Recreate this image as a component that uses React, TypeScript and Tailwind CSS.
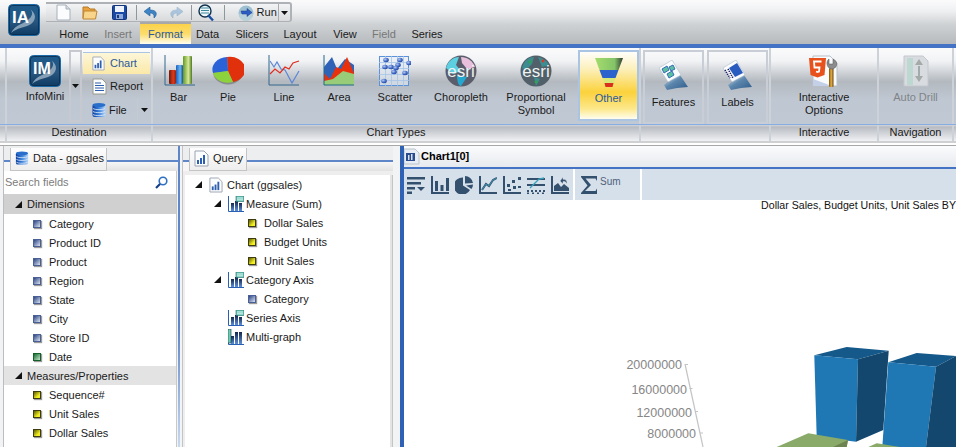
import type { ReactNode } from 'react'

const Caret = ({ color = '#111' }: { color?: string }) => (
  <svg width="7" height="4" viewBox="0 0 7 4" className="block">
    <polygon points="0,0 7,0 3.5,4" fill={color} />
  </svg>
)

const Expander = () => (
  <svg width="7" height="7" viewBox="0 0 7 7" className="block shrink-0">
    <polygon points="0,7 7,7 7,0" fill="#111" />
  </svg>
)

// Square field markers in the trees
const FieldMark = ({ kind }: { kind: 'dim' | 'date' | 'measure' }) => {
  const cls =
    kind === 'dim'
      ? 'border-[#4a5f96] bg-[linear-gradient(135deg,#2c4686,#dce4f2)]'
      : kind === 'date'
        ? 'border-[#14602a] bg-[linear-gradient(135deg,#146c30,#c4e6c8)]'
        : 'border-[#3c3c10] bg-[linear-gradient(135deg,#5c5a08,#f4f020_70%)]'
  return <span className={`block w-[8px] h-[8px] shrink-0 border shadow-[1px_1px_1px_#9a9a9a] ${cls}`} />
}

const BrandTile = ({ label, size, fontSize }: { label: string; size: number; fontSize: number }) => (
  <svg width={size} height={size} viewBox="0 0 32 32" className="block">
    <defs>
      <linearGradient id={`tile${label}`} x1="0" y1="0" x2="0" y2="1">
        <stop offset="0" stopColor="#1c5a8c" />
        <stop offset="0.55" stopColor="#28567e" />
        <stop offset="1" stopColor="#0c3a62" />
      </linearGradient>
    </defs>
    <rect x="0.5" y="0.5" width="31" height="31" rx="4" fill={`url(#tile${label})`} stroke="#1a6aa8" />
    <rect x="1.5" y="1.5" width="29" height="29" rx="3" fill="none" stroke="#0c2c4c" strokeWidth="0.8" />
    <path d="M22 5 C28 11 20 17 13 20 C8 22 5 25 3 29 C10 23 17 24 23 20 C28 16 29 10 22 5Z" fill="#a8bccc" opacity="0.75" />
    <text x="4" y="19" fontSize={fontSize} fontWeight="700" fill="#fff" fontFamily="Liberation Sans, sans-serif">{label}</text>
  </svg>
)

const PageIcon = () => (
  <svg width="15" height="17" viewBox="0 0 15 17" className="block">
    <path d="M1 1H10L14 5V16H1Z" fill="#fbfcfe" stroke="#a8b0bc" />
    <path d="M10 1V5H14" fill="#d8dce4" stroke="#a8b0bc" />
  </svg>
)

const FolderIcon = () => (
  <svg width="16" height="15" viewBox="0 0 16 15" className="block">
    <path d="M1 2H6L8 4H13V13H1Z" fill="#e8a13c" stroke="#b57a28" />
    <path d="M2 6H15L13.5 14H1Z" fill="#f8d58a" stroke="#c08630" />
  </svg>
)

const SaveIcon = () => (
  <svg width="15" height="15" viewBox="0 0 15 15" className="block">
    <rect x="0.5" y="0.5" width="14" height="14" rx="1" fill="#1b4aa6" stroke="#15357a" />
    <rect x="3" y="1" width="9" height="6" fill="#eef3fb" />
    <rect x="4" y="9" width="7" height="5" fill="#8ea8d8" />
    <rect x="5" y="10" width="2" height="3" fill="#1b3a7a" />
  </svg>
)

const UndoIcon = ({ faded }: { faded?: boolean }) => (
  <svg width="14" height="12" viewBox="0 0 14 12" className={`block ${faded ? 'opacity-35 -scale-x-100' : ''}`}>
    <path d="M6 0 L0 4.5 L6 9 V6 C9 6 10.5 7.5 10 11 C13.5 8 13.5 3 6 3Z" fill="#3d85c6" stroke="#205c94" strokeWidth="0.6" />
  </svg>
)

const FindIcon = () => (
  <svg width="16" height="18" viewBox="0 0 16 18" className="block">
    <circle cx="7" cy="7" r="6" fill="#eef6fa" stroke="#10304c" strokeWidth="1.4" />
    <path d="M3 4H11M3 6.5H11M3 9H11" stroke="#3a8a9c" strokeWidth="1" />
    <path d="M10 11L15 16.5" stroke="#1a4fa0" strokeWidth="2.4" />
  </svg>
)

const RunIcon = () => (
  <svg width="16" height="16" viewBox="0 0 16 16" className="block">
    <circle cx="8" cy="8" r="7.5" fill="#9cc0d0" />
    <path d="M1 9 A7 7 0 0 0 15 9 Z" fill="#b8d0da" />
    <path d="M3 6 H9 V3.5 L14 7.5 L9 11.5 V9 H4Z" fill="#2c5cc4" stroke="#1a3a8a" strokeWidth="0.5" />
  </svg>
)

const ChartDocIcon = ({ size = 15 }: { size?: number }) => (
  <svg width={size} height={size + 2} viewBox="0 0 15 17" className="block">
    <path d="M1 1H10L14 5V16H1Z" fill="#fbfcfe" stroke="#9aa4b0" />
    <rect x="3" y="10" width="2" height="4" fill="#2d5fb0" />
    <rect x="6" y="8" width="2" height="6" fill="#2d5fb0" />
    <rect x="9" y="5" width="2" height="9" fill="#2d5fb0" />
  </svg>
)

const ReportIcon = () => (
  <svg width="15" height="17" viewBox="0 0 15 17" className="block">
    <path d="M1 1H10L14 5V16H1Z" fill="#fbfcfe" stroke="#9a9a90" />
    <path d="M3 5H9M3 7.5H12M3 10H12M3 12.5H12" stroke="#2d5fb0" />
  </svg>
)

const DatabaseIcon = ({ w = 14, h = 16, id }: { w?: number; h?: number; id: string }) => (
  <svg width={w} height={h} viewBox="0 0 14 16" className="block">
    <defs>
      <linearGradient id={id} x1="0" y1="0" x2="1" y2="0">
        <stop offset="0" stopColor="#0a3c9c" />
        <stop offset="0.5" stopColor="#3a82dc" />
        <stop offset="1" stopColor="#b8d4f4" />
      </linearGradient>
    </defs>
    <rect x="0.5" y="1.5" width="13" height="13" rx="2" fill={`url(#${id})`} />
    <ellipse cx="7" cy="2.5" rx="6.5" ry="2" fill="#2a6ecc" />
    <path d="M1 6C3 7.5 11 7.5 13 6M1 9C3 10.5 11 10.5 13 9M1 12C3 13.5 11 13.5 13 12" fill="none" stroke="#e4eefa" strokeWidth="0.8" />
  </svg>
)

const AxisIcon = ({ badge }: { badge?: boolean }) => (
  <svg width="16" height="16" viewBox="0 0 16 16" className="block">
    <defs>
      <linearGradient id={badge ? 'axisBadge' : 'axisPlain'} x1="0" y1="0" x2="0" y2="1">
        <stop offset="0" stopColor="#12264c" />
        <stop offset="1" stopColor="#5f8fd8" />
      </linearGradient>
    </defs>
    <path d="M0.5 0V15.5H16" fill="none" stroke="#2a60b4" />
    <rect x="3" y="7" width="3" height="8" fill={`url(#${badge ? 'axisBadge' : 'axisPlain'})`} />
    <rect x="7" y={badge ? 5 : 3} width="3" height={badge ? 10 : 12} fill={`url(#${badge ? 'axisBadge' : 'axisPlain'})`} />
    <rect x="11" y={badge ? 7 : 3} width="3" height={badge ? 8 : 12} fill={`url(#${badge ? 'axisBadge' : 'axisPlain'})`} />
    {badge ? (
      <>
        <rect x="8" y="0" width="8" height="5.5" fill="#6fc8b8" stroke="#1e6a6a" strokeWidth="0.6" />
        <path d="M9 2H15M9 3.8H15" stroke="#fff" strokeWidth="0.7" />
      </>
    ) : (
      <rect x="0" y="0" width="3" height="14" fill="#6fd0b0" stroke="#10304c" strokeWidth="0.6" />
    )}
  </svg>
)

const BarIcon = () => (
  <svg width="32" height="32" viewBox="0 0 32 32" className="block">
    <defs>
      <linearGradient id="barR" x1="0" y1="0" x2="1" y2="0"><stop offset="0" stopColor="#6a1a10" /><stop offset="0.6" stopColor="#e03a1c" /><stop offset="1" stopColor="#8c2410" /></linearGradient>
      <linearGradient id="barB" x1="0" y1="0" x2="1" y2="0"><stop offset="0" stopColor="#1a5fc0" /><stop offset="0.6" stopColor="#6cb6f0" /><stop offset="1" stopColor="#1c4e9a" /></linearGradient>
      <linearGradient id="barG" x1="0" y1="0" x2="1" y2="0"><stop offset="0" stopColor="#5e9a20" /><stop offset="0.6" stopColor="#d8e89c" /><stop offset="1" stopColor="#4c7a1c" /></linearGradient>
    </defs>
    <path d="M1 0V30H31" fill="none" stroke="#33668c" />
    <rect x="5" y="15" width="7" height="14" rx="1" fill="url(#barR)" />
    <rect x="12" y="10" width="7" height="19" rx="1" fill="url(#barB)" />
    <rect x="19" y="1" width="9" height="28" rx="1" fill="url(#barG)" />
  </svg>
)

const PieIcon = () => (
  <svg width="32" height="30" viewBox="0 0 32 30" className="block">
    <ellipse cx="16" cy="16" rx="15" ry="12.5" fill="#6a6a6a" opacity="0.6" />
    <path d="M16 15 L15 1 A15 12.5 0 0 1 21 26 Z" fill="#e0300c" />
    <path d="M16 15 L15 1 A15 12.5 0 0 0 1 17 Z" fill="#2c62d8" />
    <path d="M16 15 L1 17 A15 12.5 0 0 0 21 26 Z" fill="#8cd23c" />
  </svg>
)

const LineIcon = () => (
  <svg width="32" height="32" viewBox="0 0 32 32" className="block">
    <path d="M1 0V30H31" fill="none" stroke="#33668c" />
    <path d="M2 6 L6 12 L9 7 L13 14 L17 15 L24 28 L31 16" fill="none" stroke="#5a86d8" strokeWidth="1.2" />
    <path d="M2 19 L7 14 L12 18 L17 12 L21 14 L25 8 L31 6" fill="none" stroke="#e02c1c" strokeWidth="1.2" />
  </svg>
)

const AreaIcon = () => (
  <svg width="32" height="32" viewBox="0 0 32 32" className="block">
    <path d="M1 12 L9 2 L14 14 L22 4 L31 10 V30 H1Z" fill="#2f63b8" />
    <path d="M1 18 L7 24 L13 12 L18 14 L24 2 L31 18 V30 H1Z" fill="#e8300c" />
    <path d="M1 26 L10 24 L20 16 L31 19 V30 H1Z" fill="#98cc78" />
    <path d="M1 0V30H31" fill="none" stroke="#1f6a8c" />
  </svg>
)

const ScatterIcon = () => {
  const dots = [[7, 4], [21, 4], [6, 11], [12, 11], [19, 9], [30, 7], [15, 16], [26, 17], [5, 25], [17, 12]]
  return (
    <svg width="32" height="30" viewBox="0 0 32 30" className="block">
      <defs>
        <radialGradient id="dotFill" cx="0.35" cy="0.35" r="0.8">
          <stop offset="0" stopColor="#b4c8f0" />
          <stop offset="0.6" stopColor="#3a64c4" />
          <stop offset="1" stopColor="#1c3480" />
        </radialGradient>
      </defs>
      <rect x="0.5" y="0.5" width="29" height="29" fill="#e4ecf6" fillOpacity="0.6" stroke="#5c92d8" />
      <path d="M6.5 0V30M12.5 0V30M18.5 0V30M24.5 0V30M0 6.5H30M0 12.5H30M0 18.5H30M0 24.5H30" stroke="#a4c4ea" strokeWidth="0.8" />
      {dots.map(([x, y]) => (
        <ellipse key={`${x}-${y}`} cx={x} cy={y} rx="2.8" ry="2.2" fill="url(#dotFill)" />
      ))}
    </svg>
  )
}

const EsriGlobe = ({ variant }: { variant: 'choro' | 'prop' }) => (
  <svg width="32" height="32" viewBox="0 0 32 32" className="block">
    <circle cx="16" cy="16" r="15.5" fill={variant === 'choro' ? '#5a5e6c' : '#52606a'} />
    {variant === 'choro' ? (
      <>
        <path d="M1 13 C3 6 8 2 14 2 L11 10 L16 16 L8 19 Z" fill="#5cd0e0" />
        <path d="M16 2 C22 2 28 6 30 12 L22 14 L17 8Z" fill="#e8c0dc" />
        <path d="M12 20 L22 22 L16 31 C14 31 12 28 12 20Z" fill="#24a8d0" />
      </>
    ) : (
      <>
        <path d="M2 13 C4 6 8 2 14 2 L12 9 L6 15Z" fill="#3e8c90" />
        <path d="M18 2 C23 3 27 6 29 10 L22 12Z" fill="#3e8c90" />
        <path d="M14 22 L20 24 L16 31Z" fill="#3e8c90" />
        <circle cx="10" cy="7" r="1.4" fill="#2ca84c" />
        <circle cx="23" cy="6" r="1.4" fill="#d83a2c" />
        <circle cx="16" cy="27" r="1.4" fill="#2ca84c" />
      </>
    )}
    <text x="16" y="21.5" textAnchor="middle" fontSize="17" fill="#eef4f4" fontFamily="Liberation Sans, sans-serif">esri</text>
  </svg>
)

const FunnelIcon = () => (
  <svg width="30" height="32" viewBox="0 0 30 32" className="block">
    <defs>
      <linearGradient id="funTop" x1="0" y1="0" x2="1" y2="0"><stop offset="0" stopColor="#a4dc6c" /><stop offset="0.7" stopColor="#84c468" /><stop offset="1" stopColor="#303a30" /></linearGradient>
    </defs>
    <path d="M1 2 H29 L24.5 14 H5.5Z" fill="url(#funTop)" />
    <path d="M5.5 14 H24.5 L21.5 22 H8.5Z" fill="#2b62cc" />
    <path d="M8.5 22 H21.5 L19.5 27 H10.5Z" fill="#d8e878" />
    <path d="M10.5 27 H19.5 L18.5 31 H11.5Z" fill="#d8301c" />
  </svg>
)

const SheetIcon = ({ id, kind }: { id: string; kind: 'features' | 'labels' }) => (
  <svg width="30" height="30" viewBox="0 0 30 30" className="block">
    <defs>
      <linearGradient id={id} x1="0" y1="0" x2="1" y2="1">
        <stop offset="0" stopColor="#f0f4f8" />
        <stop offset="0.45" stopColor="#5c86ac" />
        <stop offset="1" stopColor="#2c5c8c" />
      </linearGradient>
    </defs>
    <path d="M5 25 L13 18 L21 15 L29 27 L18 28 L8 30Z" fill={`url(#${id})`} />
    <path d="M0 8 L13 0 L22 15 L9 22Z" fill="#fafcfe" stroke="#aebccc" strokeWidth="0.6" />
    {kind === 'features' ? (
      <path d="M3 9 L8 6 L10 10 L5 13Z M10 7 L14 5 L16 9 L12 11Z M8 14 L13 11 L15 15 L10 18Z" fill="#5cc0a0" stroke="#2a60b8" strokeWidth="0.9" />
    ) : (
      <>
        <path d="M6 8 L14 3 L20 13 L12 17Z" fill="#2a5cc0" />
        <path d="M2 10 L7 18 M5 9 L10 18" stroke="#1a1a60" strokeWidth="1.6" strokeDasharray="1.2 1" />
      </>
    )}
  </svg>
)

const Html5Icon = () => (
  <svg width="33" height="33" viewBox="0 0 33 33" className="block">
    <defs>
      <linearGradient id="wrench" x1="0" y1="0" x2="1" y2="0"><stop offset="0" stopColor="#7a5010" /><stop offset="0.5" stopColor="#e8b040" /><stop offset="1" stopColor="#6a4410" /></linearGradient>
    </defs>
    <path d="M5 1 H22 L29 8 V31 H5Z" fill="#f8fafc" stroke="#b8c0c8" />
    <path d="M5 24 L24 31 H5Z" fill="#c4d0e8" />
    <path d="M1 3 H18 L16.5 20 L9.5 22.5 L2.5 20Z" fill="#e8501c" />
    <path d="M13.5 6.5 H6 L6.5 12.5 H11.5 L11 16.5 L9.5 17 L8 16.5" fill="none" stroke="#fff" strokeWidth="1.8" />
    <rect x="21" y="13" width="4.5" height="19" rx="1" fill="url(#wrench)" />
    <path d="M23 14 C18 12 18 6 21 4 V9 H25 V4 C30 6 30 12 25 14Z" fill="#8c8c8c" stroke="#505050" strokeWidth="0.5" />
  </svg>
)

const DrillIcon = () => (
  <svg width="26" height="32" viewBox="0 0 26 32" className="block">
    <path d="M1 1 H20 L25 6 V31 H1Z" fill="#d8dce0" stroke="#c4c8cc" />
    <rect x="4" y="3" width="6" height="27" fill="#bcd8d0" />
    <path d="M16 4 L20 10 H12Z M16 16 L12 10 M16 27 L12 21 H20Z" fill="#a4aaa8" />
    <path d="M16 11V21" stroke="#a4aaa8" strokeWidth="2" />
  </svg>
)

const MagnifierIcon = () => (
  <svg width="13" height="13" viewBox="0 0 13 13" className="block">
    <circle cx="8" cy="5" r="3.8" fill="#fff" stroke="#2f6fc4" strokeWidth="1.6" />
    <path d="M5 8L1 12" stroke="#123f88" strokeWidth="2.2" />
  </svg>
)

const TB = ({ children }: { children: ReactNode }) => (
  <svg width="18" height="18" viewBox="0 0 18 18" className="block" fill="#34506f">
    {children}
  </svg>
)

const toolbarIcons = [
  <TB key="sort">
    <path d="M0 1H18V3.5H0ZM0 6H14V8.5H0ZM0 11H8V13.5H0ZM0 15.5H5V18H0ZM10 11H18L14 15Z" />
  </TB>,
  <TB key="bar">
    <path d="M0 0H2V16H18V18H0ZM4 5H7V15H4ZM9.5 9H12.5V15H9.5ZM15 2H18V15H15Z" />
  </TB>,
  <TB key="pie">
    <path d="M8 1.5V9.5L15 14A8.6 8.6 0 1 1 8 1.5Z" />
    <path d="M10 0A8.6 8.6 0 0 1 18 7L10 7.5Z" />
    <path d="M11 9.5L18 8.5A8.6 8.6 0 0 1 16.5 13Z" />
  </TB>,
  <TB key="line">
    <path d="M0 0H2V16H18V18H0Z" />
    <path d="M3 14L7 8L10 10L14 4L18 2" fill="none" stroke="#34506f" strokeWidth="2" />
    <path d="M3 14L7 8L10 10L14 4L18 2" fill="none" stroke="#3aa0b8" strokeWidth="0.8" />
  </TB>,
  <TB key="scatter">
    <path d="M0 0H2V16H18V18H0ZM4 8H7V11H4ZM5 13H8V15H5ZM10 10H13V13H10ZM9 4H12V7H9ZM15 1H18V4H15ZM15 10H18V12H15Z" />
  </TB>,
  <TB key="multi">
    <path d="M0 2H18V4H0ZM0 8H18V10H0ZM0 14H2V16H0ZM4 14H6V16H4ZM8 14H10V16H8ZM12 14H14V16H12ZM16 14H18V16H16ZM0 16.5H2V18H0ZM5 16.5H7V18H5ZM10 16.5H12V18H10ZM15 16.5H17V18H15Z" />
    <path d="M3 12L8 7L12 3L17 2" fill="none" stroke="#3aa0b8" strokeWidth="1.3" />
  </TB>,
  <TB key="area">
    <path d="M0 0H2V16H18V18H0Z" />
    <path d="M3 15V10L7 7L10 11L13 8L18 12V15Z" />
    <path d="M9 5L12 1V3.2C15 3 16.5 5 16 8C15 6 14 5.5 12 5.6V8Z" fill="#34506f" stroke="#d6e0eb" strokeWidth="0.5" />
  </TB>,
]

const SigmaIcon = () => (
  <svg width="18" height="18" viewBox="0 0 18 18" className="block">
    <path d="M1 0H17V5L15.5 2.5H5.5L11 9L5 15H15.5L17 12.5V18H1V17L7.5 9.5L1 1Z" fill="#34506f" />
  </svg>
)

const RibbonButton = ({
  width,
  label,
  icon,
  iconClass = '',
}: {
  width: string
  label: ReactNode
  icon: ReactNode
  iconClass?: string
}) => (
  <div className={`flex flex-col items-center shrink-0 pt-[7px] text-center leading-[13px] ${width}`}>
    <div className={`h-[32px] flex items-center justify-center ${iconClass}`}>{icon}</div>
    <div className="mt-[4px]">{label}</div>
  </div>
)

const OutlinedButton = ({ label, icon, className }: { label: string; icon: ReactNode; className: string }) => (
  <div className={`flex flex-col items-center shrink-0 border-2 border-[#c9ced6] ${className}`}>
    <div className="mt-[8px] h-[30px] flex items-center justify-center">{icon}</div>
    <div className="mt-[6px] leading-[13px]">{label}</div>
  </div>
)

const TabHeader = ({ icon, label, tabWidth, lead }: { icon: ReactNode; label: string; tabWidth: string; lead: string }) => (
  <div className="flex items-start h-[25px] bg-[#eceef0]">
    <div className={`${lead} mt-[14px] border-t-2 border-[#5f86c8] bg-[#f6f6f6]`} />
    <div
      className={`${tabWidth} h-[23px] mt-[2px] flex items-center gap-[4px] pl-[4px] pb-[2px] border border-t-0 border-[#c4c4c4] bg-[linear-gradient(#fdfdfd,#eeeeee)]`}
    >
      {icon}
      <span>{label}</span>
    </div>
    <div className="flex-1 mt-[14px] border-t-2 border-[#5f86c8] h-[11px] bg-[linear-gradient(#f6f6f6,#e2e2e2)]" />
  </div>
)

const FieldRow = ({ label, kind, pad = 'pl-[29px]' }: { label: string; kind: 'dim' | 'date' | 'measure'; pad?: string }) => (
  <div className={`h-[19px] flex items-center gap-[8px] ${pad}`}>
    <FieldMark kind={kind} />
    <span className="pt-[1px]">{label}</span>
  </div>
)

const dims: [string, 'dim' | 'date'][] = [
  ['Category', 'dim'],
  ['Product ID', 'dim'],
  ['Product', 'dim'],
  ['Region', 'dim'],
  ['State', 'dim'],
  ['City', 'dim'],
  ['Store ID', 'dim'],
  ['Date', 'date'],
]

const Group = ({ width, label, children }: { width: string; label: string; children: ReactNode }) => (
  <div className={`${width} shrink-0 flex flex-col border-r-2 border-[#cdd2d8]`}>
    <div className="h-[76px] flex">{children}</div>
    <div className="h-[17px] pt-[1px] text-center leading-[15px]">{label}</div>
  </div>
)

const FieldsPanel = () => (
  <div className="w-[175px] ml-[3px] shrink-0 border-l border-[#bdbdbd] flex flex-col">
    <TabHeader
      icon={<DatabaseIcon w={14} h={15} id="dbTab" />}
      label="Data - ggsales"
      tabWidth="w-[97px]"
      lead="w-[6px] h-[11px]"
    />
    <div className="flex-1 bg-white mr-[1px] border-r border-[#c8c8c8]">
      <div className="h-[23px] flex items-center justify-between pl-[1px] pr-[8px] text-[#7c7c7c]">
        <span>Search fields</span>
        <MagnifierIcon />
      </div>
      <div className="h-[20px] bg-[#d0d0d0] flex items-center pl-[11px] gap-[5px]">
        <Expander />
        <span className="pt-[1px]">Dimensions</span>
      </div>
      {dims.map(([label, kind]) => (
        <FieldRow key={label} label={label} kind={kind} />
      ))}
      <div className="h-[19px] bg-[#e3e3e3] flex items-center pl-[11px] gap-[5px]">
        <Expander />
        <span className="pt-[1px]">Measures/Properties</span>
      </div>
      <FieldRow label="Sequence#" kind="measure" />
      <FieldRow label="Unit Sales" kind="measure" />
      <FieldRow label="Dollar Sales" kind="measure" />
    </div>
  </div>
)

const QueryRow = ({ pad, gap, expander, icon, label }: { pad: string; gap: string; expander?: boolean; icon: ReactNode; label: string }) => (
  <div className={`h-[19px] flex items-center ${pad}`}>
    {expander && <span className="mr-[7px]"><Expander /></span>}
    <span className={gap}>{icon}</span>
    <span className="pt-[1px]">{label}</span>
  </div>
)

const QueryPanel = () => (
  <div className="w-[211px] ml-[2px] shrink-0 border-l border-[#c4c4c4] flex flex-col">
    <TabHeader icon={<ChartDocIcon />} label="Query" tabWidth="w-[58px]" lead="w-[6px] h-[11px]" />
    <div className="flex-1 flex bg-[#eeeeee] pt-[4px]">
      <div className="flex-1 bg-white ml-[2px]">
        <QueryRow pad="pl-[10px]" gap="mr-[4px]" expander icon={<ChartDocIcon size={14} />} label="Chart (ggsales)" />
        <QueryRow pad="pl-[29px]" gap="mr-[2px]" expander icon={<AxisIcon badge />} label="Measure (Sum)" />
        <FieldRow label="Dollar Sales" kind="measure" pad="pl-[63px]" />
        <FieldRow label="Budget Units" kind="measure" pad="pl-[63px]" />
        <FieldRow label="Unit Sales" kind="measure" pad="pl-[63px]" />
        <QueryRow pad="pl-[29px]" gap="mr-[2px]" expander icon={<AxisIcon badge />} label="Category Axis" />
        <FieldRow label="Category" kind="dim" pad="pl-[63px]" />
        <QueryRow pad="pl-[43px]" gap="mr-[2px]" icon={<AxisIcon badge />} label="Series Axis" />
        <QueryRow pad="pl-[43px]" gap="mr-[2px]" icon={<AxisIcon />} label="Multi-graph" />
      </div>
      <div className="w-[3px] bg-[#e4e4e4] border-r border-[#c4c4c4]" />
    </div>
  </div>
)

// 3D chart preview, drawn in page coordinates through the viewBox
const Chart3D = () => (
  <svg viewBox="404 200 552 247" className="block w-full flex-1 min-h-0 bg-white">
    <text x="956" y="209" textAnchor="end" fontSize="10.6" fill="#111" fontFamily="Liberation Sans, sans-serif">Dollar Sales, Budget Units, Unit Sales BY</text>
    <path d="M685 364L703 447" stroke="#c4c4c4" strokeWidth="1.2" fill="none" />
    <path d="M685 364.5h3M689.5 388.5h3M695 411.5h3M700 433h3" stroke="#c4c4c4" />
    {[
      ['20000000', 682, 369],
      ['16000000', 687, 394],
      ['12000000', 692, 417],
      ['8000000', 696, 438],
    ].map(([t, x, y]) => (
      <text key={t} x={x} y={y} textAnchor="end" fontSize="12.5" fill="#868686" fontFamily="Liberation Sans, sans-serif">{t}</text>
    ))}
    <polygon points="814.3,355.3 846.7,347 888.7,350.7 858,359.3" fill="#15598a" />
    <polygon points="814.3,355.3 858,359.3 856,441.7 816.7,436.7" fill="#1f77b4" />
    <polygon points="858,359.3 888.7,350.7 883.3,430 856,441.7" fill="#13476e" />
    <polygon points="776.7,447 808.3,433.3 848,440 846.7,447" fill="#89aa68" />
    <polygon points="833,447 848,440 846.7,447" fill="#6d8450" />
    <polygon points="888.3,362.3 916.7,353 956,356 936,366.7" fill="#15598a" />
    <polygon points="888.3,362.3 936,366.7 926,447 882.3,447" fill="#1f77b4" />
    <polygon points="936,366.7 956,356 956,447 926,447" fill="#13476e" />
    <polygon points="868.3,447 876.7,443.3 900,447" fill="#89aa68" />
  </svg>
)

const ChartPanel = () => (
  <div className="flex-1 min-w-0 flex flex-col border-l-4 border-[#2f62b4] ml-[7px]">
    <div className="h-[23px] shrink-0 flex items-center gap-[1px] bg-[linear-gradient(#fbfcfd,#e6e9ee)] border-b-2 border-[#4472c4] font-bold text-black">
      <svg width="16" height="17" viewBox="0 0 16 17" className="block">
        <path d="M0 1H11L15 5V16H0Z" fill="#e8ecf4" stroke="#bcc4cc" />
        <rect x="2" y="5" width="9" height="8" fill="#2a4c8c" />
        <rect x="4" y="7" width="1.5" height="5" fill="#d8e0f0" />
        <rect x="7" y="6" width="1.5" height="6" fill="#d8e0f0" />
      </svg>
      <span>Chart1[0]</span>
    </div>
    <div className="h-[31px] shrink-0 flex items-center bg-[#d6e0eb] pl-[3px]">
      <div className="flex items-center gap-[6px] w-[166px]">{toolbarIcons}</div>
      <div className="w-[2px] h-full bg-white" />
      <div className="flex items-center w-[65px] pl-[5px]">
        <SigmaIcon />
        <span className="ml-[2px] -mt-[6px] text-[10px] text-[#51617a]">Sum</span>
      </div>
      <div className="w-[2px] h-full bg-white" />
    </div>
    <Chart3D />
  </div>
)

const DividerButton = ({ className }: { className: string }) => (
  <div className={`flex items-center justify-center border-2 border-[#c6cad0] ${className}`}>
    <Caret />
  </div>
)

export default function App() {
  return (
    <div className="w-[956px] h-[447px] overflow-hidden bg-white text-[11px] leading-[13px] text-[#1a1a1a] font-['Liberation_Sans',sans-serif] flex flex-col">
      {/* title strip */}
      <div className="h-[44px] shrink-0 flex bg-[linear-gradient(#fbfbfc,#eff0f2_25%,#cfd2d4_55%,#b6babd)]">
        <div className="pl-[8px] pt-[4px] w-[46px] shrink-0">
          <BrandTile label="IA" size={32} fontSize={17} />
        </div>
        <div className="flex-1 flex flex-col">
          <div className="w-[246px] h-[20px] mt-[2px] flex items-center rounded-r-[3px] border-t-2 border-r-2 border-b border-[#aeb2b6] bg-[linear-gradient(#f2f3f5,#d8dadc)]">
            <span className="ml-[10px]"><PageIcon /></span>
            <span className="ml-[11px]"><FolderIcon /></span>
            <span className="ml-[14px]"><SaveIcon /></span>
            <span className="ml-[9px] w-px h-[15px] bg-[#8f969c]" />
            <span className="ml-[7px]"><UndoIcon /></span>
            <span className="ml-[11px]"><UndoIcon faded /></span>
            <span className="ml-[8px] w-px h-[15px] bg-[#8f969c]" />
            <span className="ml-[6px]"><FindIcon /></span>
            <span className="ml-[10px] w-px h-[15px] bg-[#8f969c]" />
            <span className="ml-[13px]"><RunIcon /></span>
            <span className="ml-[3px]">Run</span>
            <span className="ml-[1px] w-[14px] h-[18px] flex items-center justify-center border-l border-[#a8acb0]"><Caret /></span>
          </div>
          <div className="flex-1 flex items-stretch text-[#1a1a1a]">
            <span className="w-[44px] ml-[6px] pt-[6px] text-center">Home</span>
            <span className="w-[44px] pt-[6px] text-center text-[#777]">Insert</span>
            <span className="w-[51px] pt-[4px] text-center text-[#2a5a9c] border-t-2 border-[#a8a8a8] bg-[linear-gradient(#fbd24a,#fcdc6c_50%,#fffdf0)]">Format</span>
            <span className="w-[33px] pt-[6px] text-center">Data</span>
            <span className="w-[56px] pt-[6px] text-center">Slicers</span>
            <span className="w-[40px] pt-[6px] text-center">Layout</span>
            <span className="w-[50px] pt-[6px] text-center">View</span>
            <span className="w-[28px] pt-[6px] text-center text-[#777]">Field</span>
            <span className="w-[58px] pt-[6px] text-center">Series</span>
          </div>
        </div>
      </div>
      <div className="h-[4px] shrink-0 bg-[#4472c4]" />

      {/* ribbon */}
      <div className="h-[93px] shrink-0 relative flex bg-[linear-gradient(#fbfbfc,#f2f3f5_14%,#b3b9bf_36%,#bfc7d2_55%,#c0c8d3_81%,#d0d3d8_83%,#b8bcc2_85%,#f0f1f3_100%)]">
        <div className="absolute left-0 right-0 top-[76px] h-px bg-[#86aee4]" />
        <div className="w-[7px] shrink-0 border-r-2 border-[#cdd2d8]" />
        <Group width="w-[146px]" label="Destination">
          <div className="w-[62px] flex flex-col items-center pt-[7px] pl-[14px]">
            <BrandTile label="IM" size={32} fontSize={16} />
            <div className="mt-[3px]">InfoMini</div>
          </div>
          <DividerButton className="w-[13px] h-[72px] mt-[2px]" />
          <div className="flex-1 flex flex-col pt-[4px] pl-px">
            <div className="h-[22px] mr-[1px] flex items-center gap-[5px] pl-[9px] text-[#2a5a9c] bg-[linear-gradient(#fdf6d8,#fbe9a8)] border-t border-[#aac4e4]">
              <ChartDocIcon size={13} />
              <span>Chart</span>
            </div>
            <div className="h-[25px] flex items-center gap-[3px] pl-[9px]">
              <ReportIcon />
              <span>Report</span>
            </div>
            <div className="h-[22px] flex items-center gap-[3px] pl-[9px]">
              <DatabaseIcon w={14} h={17} id="dbFile" />
              <span>File</span>
              <DividerButton className="w-[13px] h-[22px] ml-auto mr-px border-r-0 border-t-0 border-b-0 border-l" />
            </div>
          </div>
        </Group>
        <Group width="w-[488px]" label="Chart Types">
          <RibbonButton width="w-[51px]" label="Bar" icon={<BarIcon />} iconClass="ml-[3px]" />
          <RibbonButton width="w-[48px]" label="Pie" icon={<PieIcon />} />
          <RibbonButton width="w-[64px]" label="Line" icon={<LineIcon />} />
          <RibbonButton width="w-[46px]" label="Area" icon={<AreaIcon />} />
          <RibbonButton width="w-[66px]" label="Scatter" icon={<ScatterIcon />} />
          <RibbonButton width="w-[66px]" label="Choropleth" icon={<EsriGlobe variant="choro" />} />
          <RibbonButton width="w-[84px]" label={<>Proportional<br />Symbol</>} icon={<EsriGlobe variant="prop" />} />
          <div className="w-[62px] h-[71px] mt-[2px] flex flex-col items-center pt-[4px] text-[#2a5a9c] border-2 border-[#aac4e4] bg-[linear-gradient(#fffefa,#fcf0bc_25%,#fbd23c_60%,#fce88c_85%,#fffdf0)]">
            <FunnelIcon />
            <div className="mt-[4px]">Other</div>
          </div>
        </Group>
        <Group width="w-[130px]" label="">
          <div className="flex gap-[3px] pl-[2px] pt-[2px] h-[76px]">
            <OutlinedButton label="Features" icon={<SheetIcon id="sheetF" kind="features" />} className="w-[61px] h-[74px]" />
            <OutlinedButton label="Labels" icon={<SheetIcon id="sheetL" kind="labels" />} className="w-[61px] h-[74px]" />
          </div>
        </Group>
        <Group width="w-[108px]" label="Interactive">
          <RibbonButton width="w-full" label={<>Interactive<br />Options</>} icon={<Html5Icon />} />
        </Group>
        <Group width="w-[75px]" label="Navigation">
          <div className="w-full text-[#808488]">
            <RibbonButton width="w-full" label="Auto Drill" icon={<DrillIcon />} />
          </div>
        </Group>
      </div>

      {/* rules under ribbon */}
      <div className="h-[2px] shrink-0 bg-[#cfd0d2]" />
      <div className="h-[2px] shrink-0 bg-white" />
      <div className="h-[1px] shrink-0 bg-[#a8a8a8]" />

      {/* panels */}
      <div className="flex-1 min-h-0 flex bg-[#f2f3f4]">
        <FieldsPanel />
        <div className="w-[2px] shrink-0 bg-[linear-gradient(#5f86c8,#5f86c8_60%,#c8d8f0)]" />
        <QueryPanel />
        <ChartPanel />
      </div>
    </div>
  )
}
